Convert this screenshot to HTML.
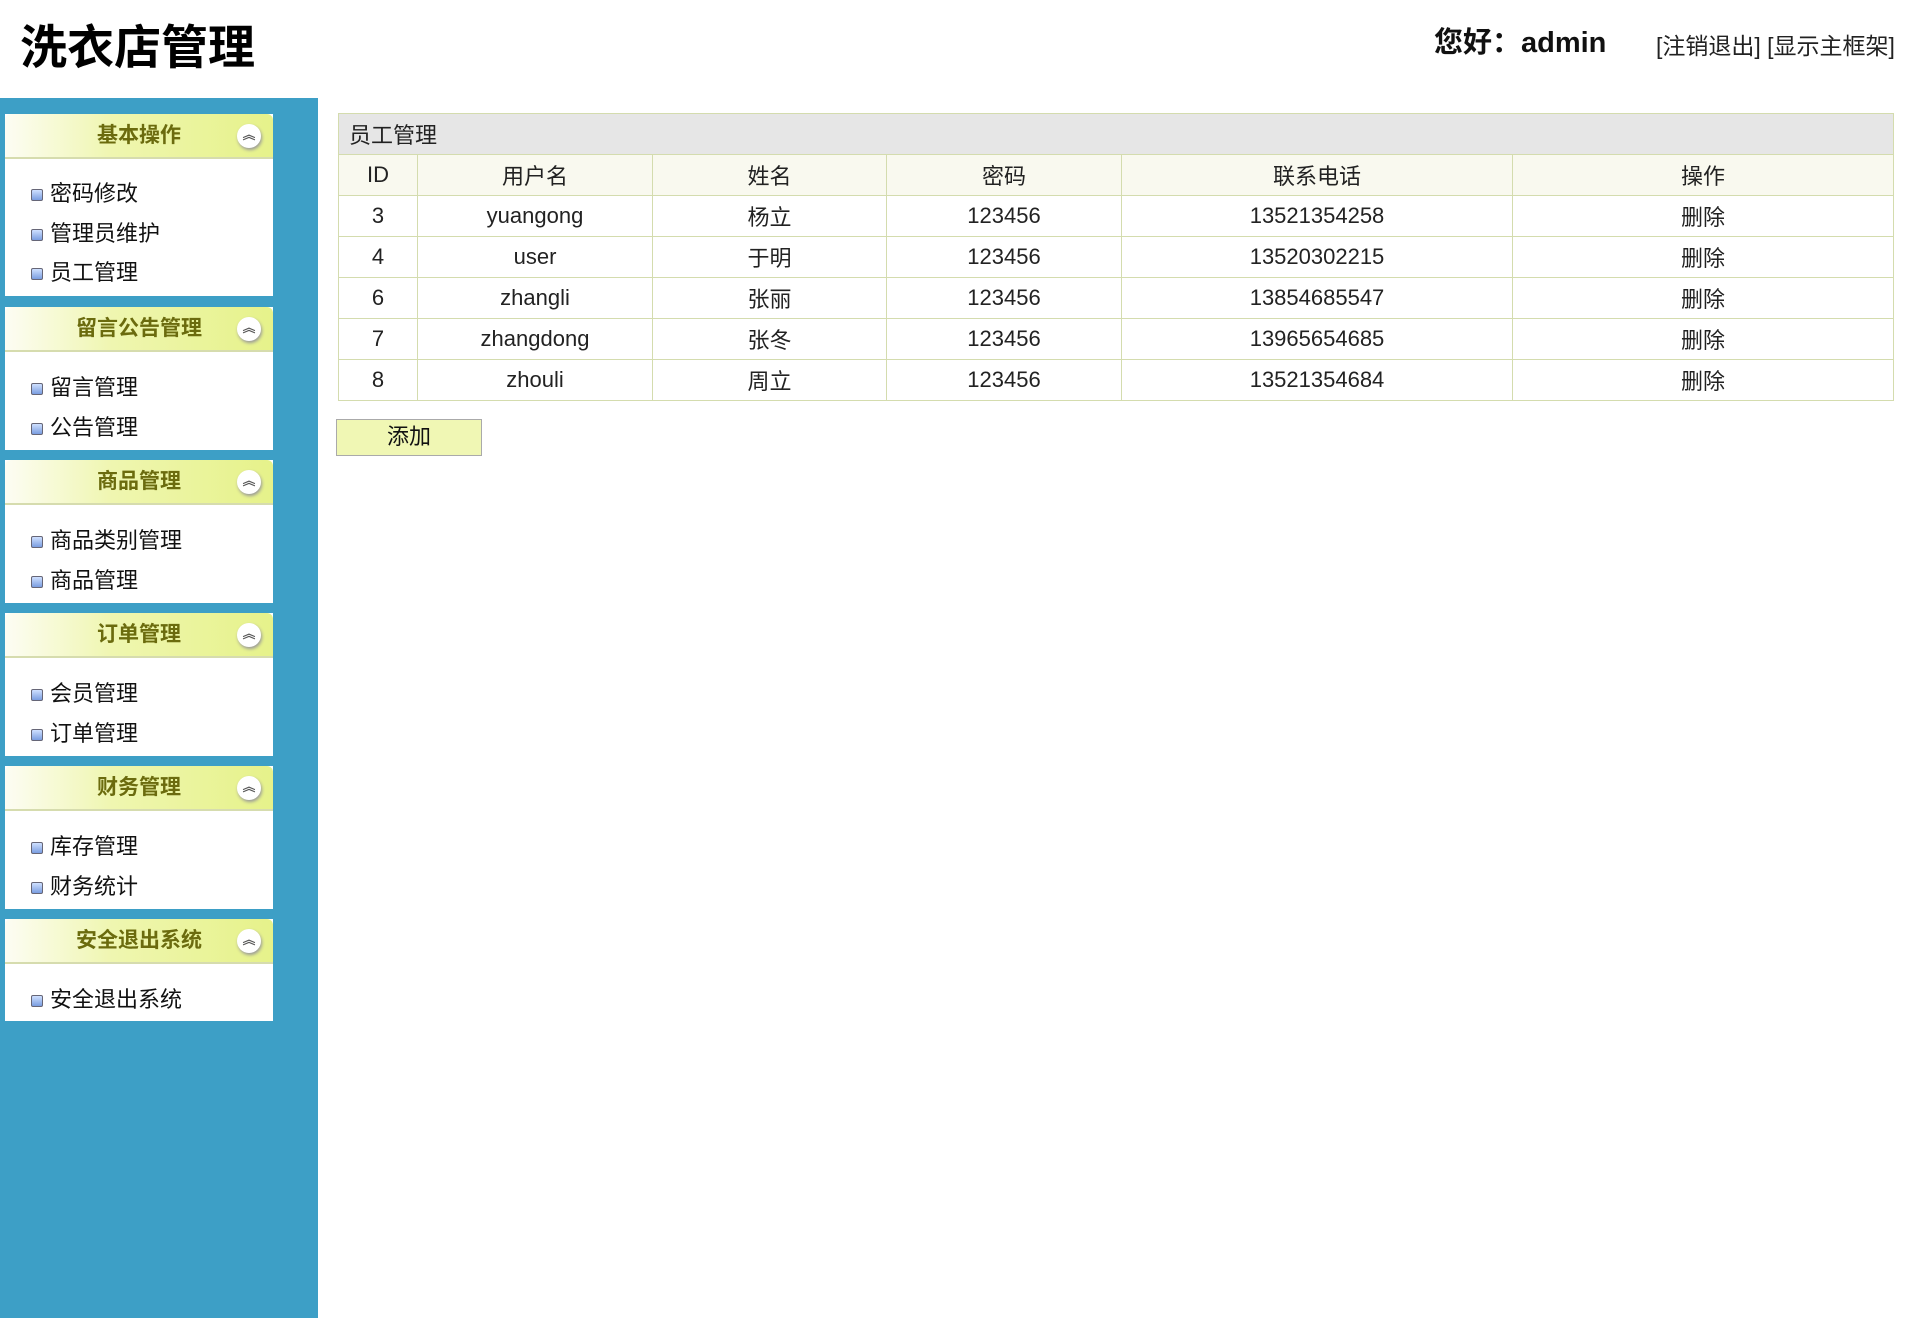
<!DOCTYPE html>
<html><head><meta charset="utf-8"><style>
*{margin:0;padding:0;box-sizing:border-box}
body{width:1911px;height:1318px;background:#fff;font-family:"Liberation Sans","Noto Sans CJK SC",sans-serif;position:relative;overflow:hidden;color:#111}
.title{position:absolute;left:20px;top:16px;font-size:47px;font-weight:bold;line-height:64px;color:#000}
.hello{position:absolute;left:1434px;top:23px;font-size:29px;font-weight:bold;line-height:40px}
.links{position:absolute;left:1656px;top:28px;font-size:23px;line-height:36px;color:#222}
.side{position:absolute;left:0;top:98px;width:318px;height:1220px;background:#3d9fc6}
.panel{position:absolute;left:5px;width:268px;background:#fff}
.ph{height:45px;border-radius:6px 6px 0 0;background:linear-gradient(90deg,#fdfdf4 0%,#eff6b0 40%,#e6f28a 100%);border-bottom:2px solid #d6dcae;text-align:center;font-size:21px;font-weight:bold;color:#6b6b0e;line-height:43px;position:relative}
.ph i{position:absolute;right:12px;top:10px;width:24px;height:24px;border-radius:50%;background:#fff;box-shadow:1px 2px 3px #999;font-style:normal;font-size:13px;line-height:22px;color:#555;font-weight:bold}
.it{position:absolute;left:45px;font-size:22px;line-height:30px;color:#111}
.it:before{content:"";position:absolute;left:-19px;top:10px;width:10px;height:10px;border:1px solid #667;background:linear-gradient(#cfe0ff,#7a9de0);border-radius:2px}
table{position:absolute;left:338px;top:113px;width:1556px;border-collapse:collapse;font-size:22px;color:#222}
td,th{border:1px solid #d4dcae;text-align:center;font-weight:normal;height:41px;padding:0}
.cap td{background:#e6e6e6;text-align:left;padding-left:10px;height:41px}
.hd th{background:#f9f9ef}
.btn{position:absolute;left:336px;top:419px;width:146px;height:37px;background:#f0f7b4;border:1px solid #aaa;text-align:center;font-size:22px;line-height:34px}
</style></head><body>
<div class="title">洗衣店管理</div>
<div class="hello">您好：admin</div>
<div class="links">[注销退出] [显示主框架]</div>
<div class="side"></div>

<div class="panel" style="top:114px;height:182px"><div class="ph">基本操作<i>︽</i></div>
<div class="it" style="top:65px">密码修改</div><div class="it" style="top:105px">管理员维护</div><div class="it" style="top:144px">员工管理</div></div>

<div class="panel" style="top:307px;height:143px"><div class="ph">留言公告管理<i>︽</i></div>
<div class="it" style="top:66px">留言管理</div><div class="it" style="top:106px">公告管理</div></div>

<div class="panel" style="top:460px;height:143px"><div class="ph">商品管理<i>︽</i></div>
<div class="it" style="top:66px">商品类别管理</div><div class="it" style="top:106px">商品管理</div></div>

<div class="panel" style="top:613px;height:143px"><div class="ph">订单管理<i>︽</i></div>
<div class="it" style="top:66px">会员管理</div><div class="it" style="top:106px">订单管理</div></div>

<div class="panel" style="top:766px;height:143px"><div class="ph">财务管理<i>︽</i></div>
<div class="it" style="top:66px">库存管理</div><div class="it" style="top:106px">财务统计</div></div>

<div class="panel" style="top:919px;height:102px"><div class="ph">安全退出系统<i>︽</i></div>
<div class="it" style="top:66px">安全退出系统</div></div>

<table>
<tr class="cap"><td colspan="6">员工管理</td></tr>
<tr class="hd"><th style="width:79px">ID</th><th style="width:235px">用户名</th><th style="width:234px">姓名</th><th style="width:235px">密码</th><th style="width:391px">联系电话</th><th>操作</th></tr>
<tr><td>3</td><td>yuangong</td><td>杨立</td><td>123456</td><td>13521354258</td><td>删除</td></tr>
<tr><td>4</td><td>user</td><td>于明</td><td>123456</td><td>13520302215</td><td>删除</td></tr>
<tr><td>6</td><td>zhangli</td><td>张丽</td><td>123456</td><td>13854685547</td><td>删除</td></tr>
<tr><td>7</td><td>zhangdong</td><td>张冬</td><td>123456</td><td>13965654685</td><td>删除</td></tr>
<tr><td>8</td><td>zhouli</td><td>周立</td><td>123456</td><td>13521354684</td><td>删除</td></tr>
</table>
<div class="btn">添加</div>
</body></html>
